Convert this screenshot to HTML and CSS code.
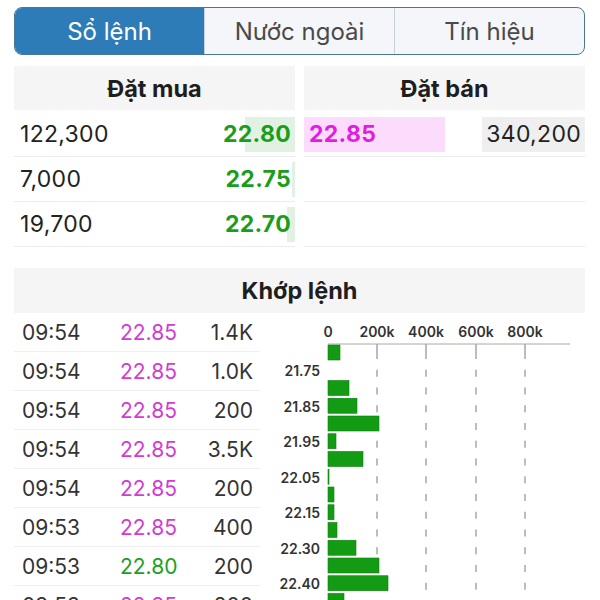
FILE: index.html
```html
<!doctype html>
<html lang="vi">
    <head>
        <meta charset="utf-8">
        <title>Sổ lệnh</title>
        <link rel="stylesheet" href="styles.css">
    </head>
    <body>
        <div class="page">

            <!-- Segmented tabs -->
            <div class="tabs">
                <div class="tab active">Sổ lệnh</div>
                <div class="tab">Nước ngoài</div>
                <div class="tab">Tín hiệu</div>
            </div>

            <!-- Order book -->
            <div class="book">
                <div class="side buy">
                    <div class="side-title">Đặt mua</div>
                    <div class="level">
                        <i class="bar" style="width: 50px"></i>
                        <span class="vol">122,300</span>
                        <span class="px">22.80</span>
                    </div>
                    <div class="level">
                        <i class="bar" style="width: 3px"></i>
                        <span class="vol">7,000</span>
                        <span class="px">22.75</span>
                    </div>
                    <div class="level">
                        <i class="bar" style="width: 8px"></i>
                        <span class="vol">19,700</span>
                        <span class="px">22.70</span>
                    </div>
                </div>
                <div class="side sell">
                    <div class="side-title">Đặt bán</div>
                    <div class="level">
                        <i class="bar" style="width: 141px"></i>
                        <span class="px">22.85</span>
                        <span class="vol-box">340,200</span>
                    </div>
                    <div class="level"></div>
                    <div class="level"></div>
                </div>
            </div>

            <!-- Matched orders -->
            <div class="match">
                <div class="match-title">Khớp lệnh</div>
                <div class="match-body">
                    <div class="ticks">
                        <div class="tick"><span>09:54</span><span class="up">22.85</span><span class="qty">1.4K</span></div>
                        <div class="tick"><span>09:54</span><span class="up">22.85</span><span class="qty">1.0K</span></div>
                        <div class="tick"><span>09:54</span><span class="up">22.85</span><span class="qty">200</span></div>
                        <div class="tick"><span>09:54</span><span class="up">22.85</span><span class="qty">3.5K</span></div>
                        <div class="tick"><span>09:54</span><span class="up">22.85</span><span class="qty">200</span></div>
                        <div class="tick"><span>09:53</span><span class="up">22.85</span><span class="qty">400</span></div>
                        <div class="tick"><span>09:53</span><span class="ref">22.80</span><span class="qty">200</span></div>
                        <div class="tick"><span>09:53</span><span class="up">22.85</span><span class="qty">200</span></div>
                    </div>

                    <svg class="chart" width="325" height="287" viewBox="0 0 325 287">
                        <g class="axis-text" text-anchor="middle">
                            <text x="68" y="24">0</text>
                            <text x="117" y="24">200k</text>
                            <text x="166" y="24">400k</text>
                            <text x="216" y="24">600k</text>
                            <text x="265" y="24">800k</text>
                        </g>
                        <line class="axis" x1="68" y1="31" x2="310" y2="31"></line>
                        <g class="grid">
                            <line x1="117" y1="31" x2="117" y2="39"></line>
                            <line x1="166" y1="31" x2="166" y2="39"></line>
                            <line x1="216" y1="31" x2="216" y2="39"></line>
                            <line x1="265" y1="31" x2="265" y2="39"></line>
                            <line class="dash" x1="117" y1="39" x2="117" y2="287"></line>
                            <line class="dash" x1="166" y1="39" x2="166" y2="287"></line>
                            <line class="dash" x1="216" y1="39" x2="216" y2="287"></line>
                            <line class="dash" x1="265" y1="39" x2="265" y2="287"></line>
                        </g>
                        <g class="bars">
                            <rect x="68" y="32" width="12" height="15"></rect>
                            <rect x="68" y="67.5" width="21" height="15"></rect>
                            <rect x="68" y="85.25" width="29" height="15"></rect>
                            <rect x="68" y="103" width="51" height="15"></rect>
                            <rect x="68" y="120.75" width="8" height="15"></rect>
                            <rect x="68" y="138.5" width="35" height="15"></rect>
                            <rect x="68" y="156.25" width="1" height="15"></rect>
                            <rect x="68" y="174" width="6" height="15"></rect>
                            <rect x="68" y="191.75" width="6" height="15"></rect>
                            <rect x="68" y="209.5" width="9" height="15"></rect>
                            <rect x="68" y="227.25" width="28" height="15"></rect>
                            <rect x="68" y="245" width="51" height="15"></rect>
                            <rect x="68" y="262.75" width="60" height="15"></rect>
                            <rect x="68" y="280.5" width="16" height="15"></rect>
                        </g>
                        <g class="price-text" text-anchor="end">
                            <text x="60" y="63">21.75</text>
                            <text x="60" y="98.5">21.85</text>
                            <text x="60" y="134">21.95</text>
                            <text x="60" y="169.5">22.05</text>
                            <text x="60" y="205">22.15</text>
                            <text x="60" y="240.5">22.30</text>
                            <text x="60" y="276">22.40</text>
                        </g>
                    </svg>
                </div>
            </div>

        </div>
    </body>
</html>
```

FILE: styles.css
```css
body {
    margin: 0;
    background: #fff;
    color: #222;
    font-family: Inter, "Noto Sans", sans-serif;
}

.page {
    height: 600px;
    padding: 7px 15px 0 14px;
    overflow: hidden;
    box-sizing: border-box;
}

/* Tabs */

.tabs {
    display: flex;
    height: 48px;
    box-sizing: border-box;
    border: 1.5px solid #4a7795;
    border-radius: 8px;
    overflow: hidden;
    background: #f4f6f9;
}

.tab {
    flex: 1;
    display: flex;
    align-items: center;
    justify-content: center;
    font-size: 24px;
    color: #4a4a4a;
    border-left: 1px solid #c5d2dc;
}

.tab.active {
    background: #2d7cb8;
    color: #fff;
    border-left: 0;
}

/* Order book */

.book {
    display: grid;
    grid-template-columns: 1fr 1fr;
    column-gap: 9px;
    margin-top: 11px;
}

.side-title {
    height: 44px;
    margin-bottom: 2px;
    display: flex;
    align-items: center;
    justify-content: center;
    background: #f5f5f5;
    font-size: 23.5px;
    font-weight: 700;
    color: #1e1e1e;
}

.level {
    position: relative;
    height: 44px;
    display: flex;
    align-items: center;
    border-bottom: 1px solid #ececec;
    font-size: 23px;
    letter-spacing: 0.3px;
}

.level .bar {
    position: absolute;
    top: 5px;
    height: 35px;
}

.level span {
    position: relative;
}

.buy .level {
    padding: 0 4px 0 6px;
}

.buy .bar {
    right: 0;
    background: #e2f2e2;
}

.buy .vol {
    flex: 1;
}

.px {
    font-weight: 700;
}

.buy .px {
    color: #1a9e1a;
}

.sell .level {
    padding-left: 5px;
}

.sell .bar {
    left: 0;
    background: #fcdcfc;
}

.sell .px {
    color: #e01ee0;
}

.vol-box {
    margin-left: auto;
    width: 103px;
    height: 35px;
    box-sizing: border-box;
    padding-right: 4px;
    display: flex;
    align-items: center;
    justify-content: flex-end;
    background: #efefef;
}

/* Matched orders */

.match {
    margin-top: 21px;
}

.match-title {
    height: 45px;
    display: flex;
    align-items: center;
    justify-content: center;
    background: #f5f5f5;
    font-size: 23.5px;
    font-weight: 700;
    color: #1e1e1e;
}

.match-body {
    display: flex;
}

.ticks {
    width: 246px;
    flex: none;
}

.tick {
    height: 38px;
    display: grid;
    grid-template-columns: 98px auto 1fr;
    align-items: center;
    padding: 0 7px 0 8px;
    border-bottom: 1px solid #efefef;
    font-size: 21px;
    color: #333;
}

.tick .up {
    color: #d23cd2;
}

.tick .ref {
    color: #22a022;
}

.tick .qty {
    text-align: right;
}

.chart {
    display: block;
    flex: none;
}

.chart text {
    font-family: Inter, "Noto Sans", sans-serif;
    font-size: 14px;
    font-weight: 600;
    fill: #333;
}

.chart .axis {
    stroke: #aaa;
    stroke-width: 1;
}

.chart .grid line {
    stroke: #a6a6a6;
    stroke-width: 1.5;
}

.chart .grid .dash {
    stroke-dasharray: 7 10.75;
}

.chart .bars rect {
    fill: #139c13;
    stroke: #0c7f0c;
    stroke-width: 0.6;
}
```
